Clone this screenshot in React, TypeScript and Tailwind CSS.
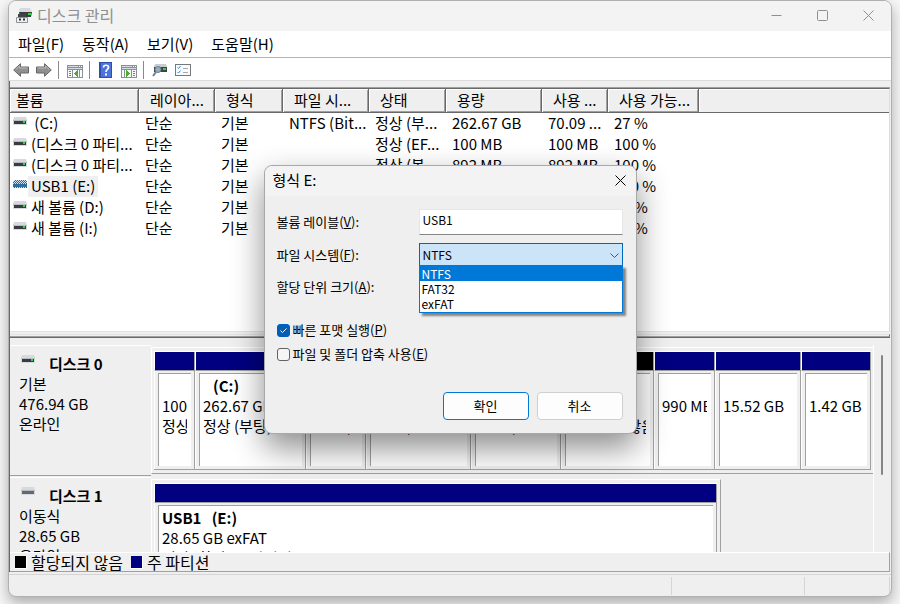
import type { ReactNode } from 'react'
import { clsx } from 'clsx'

interface Volume {
  name: string
  layout: string
  type: string
  fs: string
  status: string
  capacity: string
  free: string
  percent: string
  selected?: boolean
}

interface Partition {
  title?: string
  size: string
  status?: string
  unallocated?: boolean
}

const columns = [
  { label: '볼륨', width: 'w-[129px]' },
  { label: '레이아...', width: 'w-[76px]' },
  { label: '형식', width: 'w-[68px]' },
  { label: '파일 시...', width: 'w-[86px]' },
  { label: '상태', width: 'w-[77px]' },
  { label: '용량', width: 'w-[96px]' },
  { label: '사용 ...', width: 'w-[66px]' },
  { label: '사용 가능...', width: 'w-[91px]' },
]

const volumes: Volume[] = [
  { name: '\u00a0(C:)', layout: '단순', type: '기본', fs: 'NTFS (Bit...', status: '정상 (부...', capacity: '262.67 GB', free: '70.09 ...', percent: '27 %' },
  { name: '(디스크 0 파티...', layout: '단순', type: '기본', fs: '', status: '정상 (EF...', capacity: '100 MB', free: '100 MB', percent: '100 %' },
  { name: '(디스크 0 파티...', layout: '단순', type: '기본', fs: '', status: '정상 (복...', capacity: '892 MB', free: '892 MB', percent: '100 %' },
  { name: 'USB1 (E:)', layout: '단순', type: '기본', fs: 'exFAT', status: '정상 (활...', capacity: '28.65 GB', free: '28.65 ...', percent: '100 %', selected: true },
  { name: '새 볼륨 (D:)', layout: '단순', type: '기본', fs: 'NTFS', status: '정상 (주...', capacity: '15.52 GB', free: '15.43 ...', percent: '99 %' },
  { name: '새 볼륨 (I:)', layout: '단순', type: '기본', fs: 'NTFS', status: '정상 (주...', capacity: '1.42 GB', free: '1.40 GB', percent: '99 %' },
]

const disk0: Partition[] = [
  { size: '100 MB', status: '정상 (EFI)' },
  { title: '(C:)', size: '262.67 GB NTFS', status: '정상 (부팅, 페이지 파일)' },
  { size: '892 MB', status: '정상 (복구)' },
  { size: '97.66 GB', status: '정상 (주 파티션)' },
  { size: '48.83 GB', status: '정상 (주 파티션)' },
  { size: '49.87 GB', status: '할당되지 않음', unallocated: true },
  { size: '990 MB' },
  { size: '15.52 GB' },
  { size: '1.42 GB' },
]

const disk1: Partition[] = [
  { title: 'USB1\u00a0\u00a0 (E:)', size: '28.65 GB exFAT', status: '정상 (활성, 주 파티션)' },
]

function DriveIcon({ led, selected }: { led?: boolean; selected?: boolean }) {
  if (selected) {
    return (
      <svg width="14" height="8" viewBox="0 0 14 8" className="shrink-0" shapeRendering="crispEdges" aria-hidden="true">
        <defs>
          <pattern id="dither" width="2" height="2" patternUnits="userSpaceOnUse">
            <rect width="1" height="1" fill="#0078d7" />
            <rect x="1" y="1" width="1" height="1" fill="#0078d7" />
          </pattern>
        </defs>
        <path d="M1 0h12v1h1v7H0V1h1z" fill="#cfe0ee" />
        <path d="M0 4h14v3H0z" fill="#2f6f9f" />
        <path d="M1 0h12v1h1v7H0V1h1z" fill="url(#dither)" />
      </svg>
    )
  }
  return (
    <svg width="14" height="8" viewBox="0 0 14 8" className="shrink-0" aria-hidden="true">
      <path d="M1 0h12l1 3v5H0V3z" fill="#d6d9de" />
      <path d="M0 3h14v1H0z" fill="#b9bcc2" />
      <path d="M1 4h12v3H1z" fill={led ? '#3a3d40' : '#66696c'} />
      {led && <rect x="10" y="4" width="2" height="2" fill="#22e03c" />}
    </svg>
  )
}

function AppIcon() {
  return (
    <svg width="16" height="15" viewBox="0 0 16 15" aria-hidden="true">
      <path d="M4 0h10l2 4v1H3V3z" fill="#d6dade" />
      <path d="M3 4h13l-1 5H4z" fill="#3a3d40" />
      <rect x="12" y="5" width="3" height="2" fill="#27dd3e" />
      <path d="M2 6h8v4H2z" fill="#3f4347" />
      <path d="M0.500 9.500h11v5h-11z" fill="#f0f1f2" stroke="#8d9196" />
      <path d="M3 10.500h2v2H3zM7 10.500h2v2H7z" fill="#2b2d2f" />
    </svg>
  )
}

function ArrowIcon({ forward }: { forward?: boolean }) {
  return (
    <svg width="16" height="14" viewBox="0 0 16 14" className={clsx(forward && '-scale-x-100')} aria-hidden="true">
      <path d="M0.700 7l6.800-6.300v3.300h8v6h-8v3.300z" fill="#8f8f8f" stroke="#666" strokeLinejoin="round" />
      <path d="M2.500 6.800L6.500 3v2H14.500" fill="none" stroke="#bdbdbd" />
    </svg>
  )
}

function PanelIcon({ right }: { right?: boolean }) {
  return (
    <svg width="16" height="13" viewBox="0 0 16 13" shapeRendering="crispEdges" aria-hidden="true">
      <path d="M0 0h16v13H0z" fill="#8a9098" />
      <path d="M1 1h10v1H1zM1 3h14v1H1z" fill="#d5dbe2" />
      <path d="M12 1h1v1h-1zM14 1h1v1h-1z" fill="#fff" />
      {right ? (
        <>
          <path d="M1 5h2v7H1zM4 5h6v7H4zM11 5h4v7h-4z" fill="#fbfbfb" />
          <path d="M5 5l4 3.500L5 12z" fill="#45b02c" />
          <path d="M12 6h2v1h-2zM12 8h2v1h-2zM12 10h2v1h-2z" fill="#5b7fae" />
        </>
      ) : (
        <>
          <path d="M1 5h4v7H1zM6 5h6v7H6zM13 5h2v7h-2z" fill="#fbfbfb" />
          <path d="M11 5v7L7 8.500z" fill="#45b02c" />
          <path d="M2 6h2v1H2zM2 8h2v1H2zM2 10h2v1H2z" fill="#5b7fae" />
        </>
      )}
    </svg>
  )
}

function HelpIcon() {
  return (
    <svg width="13" height="16" viewBox="0 0 13 16" aria-hidden="true">
      <rect width="13" height="16" fill="#2f4fae" />
      <rect x="2" y="1" width="10" height="14" fill="#4c74dc" />
      <path d="M4.500 5.500c0-3 5-3 5 0 0 2-2.500 2-2.500 4.500" fill="none" stroke="#fff" strokeWidth="1.700" />
      <rect x="6" y="11.500" width="2" height="2" fill="#fff" />
    </svg>
  )
}

function RescanIcon() {
  return (
    <svg width="16" height="14" viewBox="0 0 16 14" aria-hidden="true">
      <path d="M3 1h11l1 3H2z" fill="#c9cdd2" />
      <path d="M2 4h13v5H2z" fill="#3f4245" />
      <rect x="11" y="5" width="3" height="2" fill="#27dd3e" />
      <circle cx="6" cy="6.500" r="3" fill="#8fb0c4" stroke="#6d7f8c" />
      <path d="M4 9L1 13" stroke="#6f7f8c" strokeWidth="2" />
    </svg>
  )
}

function ChecklistIcon() {
  return (
    <svg width="16" height="12" viewBox="0 0 16 12" aria-hidden="true">
      <rect x="0.500" y="0.500" width="15" height="11" fill="#fafafa" stroke="#75797e" />
      <path d="M2.500 3.500l1 1 2-2.500M2.500 8l1 1 2-2.500" fill="none" stroke="#2f8fe0" />
      <path d="M8 4.500h5M8 8.500h5" stroke="#a6a9ad" />
    </svg>
  )
}

function CloseIcon() {
  return (
    <svg width="11" height="11" viewBox="0 0 11 11" fill="none" stroke="currentColor" aria-hidden="true">
      <path d="M0.500 0.500l10 10M10.500 0.500l-10 10" />
    </svg>
  )
}

function ToolDivider() {
  return <span className="h-[18px] w-px bg-[#8a8a8a]" />
}

function TitleBar() {
  return (
    <header className="flex h-[30px] shrink-0 items-center bg-[#f3f3f3] pb-0.5 pl-[7px] text-[#8f8f8f]">
      <AppIcon />
      <h1 className="flex-1 pl-[5px] text-base leading-5">디스크 관리</h1>
      <div className="flex">
        <button type="button" aria-label="최소화" className="flex h-7 w-[46px] items-center justify-center">
          <svg width="11" height="11" viewBox="0 0 11 11" stroke="currentColor" aria-hidden="true">
            <path d="M0.500 5.500h10" />
          </svg>
        </button>
        <button type="button" aria-label="최대화" className="flex h-7 w-[46px] items-center justify-center">
          <svg width="11" height="11" viewBox="0 0 11 11" fill="none" stroke="currentColor" aria-hidden="true">
            <rect x="0.500" y="0.500" width="10" height="10" rx="1" />
          </svg>
        </button>
        <button type="button" aria-label="닫기" className="flex h-7 w-[46px] items-center justify-center">
          <CloseIcon />
        </button>
      </div>
    </header>
  )
}

function MenuBar() {
  return (
    <nav className="flex h-[27px] shrink-0 items-center gap-[18px] border-b border-[#b4b4b4] bg-white pl-[9px] text-[15px] leading-5">
      {['파일(F)', '동작(A)', '보기(V)', '도움말(H)'].map((item) => (
        <button key={item} type="button">
          {item}
        </button>
      ))}
    </nav>
  )
}

function Toolbar() {
  return (
    <div className="flex h-[23px] shrink-0 items-center border-b border-[#dcdcdc] bg-white pt-0.5 pl-1">
      <div className="flex items-center gap-[7px] pr-1.5">
        <button type="button" aria-label="뒤로"><ArrowIcon /></button>
        <button type="button" aria-label="앞으로"><ArrowIcon forward /></button>
      </div>
      <ToolDivider />
      <button type="button" aria-label="콘솔 트리 표시" className="pt-0.5 pr-1.5 pl-2"><PanelIcon /></button>
      <ToolDivider />
      <div className="flex items-center gap-[9px] pr-1.5 pl-[9px]">
        <button type="button" aria-label="도움말"><HelpIcon /></button>
        <button type="button" aria-label="작업 창 표시" className="pt-0.5"><PanelIcon right /></button>
      </div>
      <ToolDivider />
      <div className="flex items-center gap-[7px] pl-2">
        <button type="button" aria-label="다시 검사"><RescanIcon /></button>
        <button type="button" aria-label="속성"><ChecklistIcon /></button>
      </div>
    </div>
  )
}

function VolumeTable() {
  return (
    <table className="w-full table-fixed border-separate border-spacing-0 text-left leading-5 whitespace-nowrap">
      <thead>
        <tr>
          {columns.map((col, i) => (
            <th
              key={col.label}
              className={clsx(
                'h-6 overflow-hidden border-r border-b border-[#696969] bg-[#efefef] p-0 pb-0.5 font-normal shadow-[inset_1px_1px_0_#fff,inset_-1px_-1px_0_#a0a0a0]',
                i === 0 ? 'pl-1.5' : 'pl-[11px]',
                col.width,
              )}
            >
              {col.label}
            </th>
          ))}
          <th aria-label="빈 열" className="h-6 border-b border-[#696969] bg-[#efefef] p-0 shadow-[inset_1px_1px_0_#fff]" />
        </tr>
      </thead>
      <tbody>
        {volumes.map((v, i) => (
          <tr key={i} className="align-top">
            <td className="h-[21px] overflow-hidden p-0">
              <div className="flex items-start pl-[3px]">
                <span className="pt-1">
                  <DriveIcon led selected={v.selected} />
                </span>
                <span className={clsx('ml-px h-[21px] px-[3px]', v.selected && 'bg-[#efefef]')}>{v.name}</span>
              </div>
            </td>
            {[v.layout, v.type, v.fs, v.status, v.capacity, v.free, v.percent].map((text, j) => (
              <td key={j} className="overflow-hidden p-0 pl-1.5">
                {text}
              </td>
            ))}
            <td />
          </tr>
        ))}
      </tbody>
    </table>
  )
}

function PartitionCell({ part }: { part: Partition }) {
  return (
    <div className="flex min-w-0 flex-col border-r border-b border-[#a0a0a0]">
      <div
        className={clsx(
          'h-[19px] shrink-0 border-b border-l border-b-[#a0a0a0] border-l-white',
          part.unallocated ? 'bg-black' : 'bg-[#000080]',
        )}
      />
      <div className="flex min-h-0 flex-1 border-l border-white pt-0.5 pr-[3px] pb-[3px] pl-[3px]">
        <div className="min-w-0 flex-1 border-t border-l border-[#a0a0a0] bg-white pt-0.5 pr-1 pl-[3px]">
          <div className="overflow-hidden whitespace-nowrap">
            <p className={clsx('h-5 leading-5 font-bold', part.title === '(C:)' && 'pl-2.5')}>{part.title}</p>
            <p className="h-5 leading-5">{part.size}</p>
            <p className="h-5 leading-5">{part.status}</p>
          </div>
        </div>
      </div>
    </div>
  )
}

interface DiskRowProps {
  name: string
  lines: string[]
  led?: boolean
  children: ReactNode
}

function DiskRow({ name, lines, led, children }: DiskRowProps) {
  return (
    <section className="flex h-[132px] shrink-0">
      <div className="h-[131px] w-[141px] shrink-0 border-t border-b border-t-white border-b-[#a0a0a0] pt-2 pl-[9px]">
        <div className="flex h-5 items-start">
          <span className="pt-px pl-0.5">
            <DriveIcon led={led} />
          </span>
          <h2 className="pl-3.5 leading-5 font-bold">{name}</h2>
        </div>
        {lines.map((line) => (
          <p key={line} className="h-5 leading-5">
            {line}
          </p>
        ))}
      </div>
      <div className="min-w-0 flex-1 pt-0.5">{children}</div>
    </section>
  )
}

function DiskView() {
  return (
    <div className="flex min-h-0 flex-[207_1_0%] overflow-hidden bg-[#efefef] pt-[7px]">
      <div className="min-w-0 flex-1 border-r border-white">
        <DiskRow name="디스크 0" lines={['기본', '476.94 GB', '온라인']} led>
          <div className="flex h-[127px] border-t border-b border-l border-t-white border-b-[#a0a0a0] border-l-white pt-[3px] pr-0.5 pb-[3px] pl-0.5">
            <div className="grid flex-1 grid-cols-[41fr_111fr_60fr_105fr_90fr_93fr_61fr_86fr_70fr] border-t border-white">
              {disk0.map((part, i) => (
                <PartitionCell key={i} part={part} />
              ))}
            </div>
          </div>
        </DiskRow>
        <DiskRow name="디스크 1" lines={['이동식', '28.65 GB', '온라인']}>
          <div className="flex h-[127px] w-[79%] border-t border-r border-b border-l border-t-white border-r-[#a0a0a0] border-b-[#a0a0a0] border-l-white pt-[3px] pr-[3px] pb-[3px] pl-0.5">
            <div className="grid flex-1 border-t border-white">
              {disk1.map((part, i) => (
                <PartitionCell key={i} part={part} />
              ))}
            </div>
          </div>
        </DiskRow>
      </div>
      <div className="flex w-4 shrink-0 justify-center pt-2.5">
        <span className="h-[120px] w-0.5 rounded-full bg-[#858585]" />
      </div>
    </div>
  )
}

function Legend() {
  return (
    <div className="flex h-5 shrink-0 items-center border-t border-r border-b border-t-white border-r-[#a0a0a0] border-b-[#a0a0a0] bg-[#efefef] pl-[5px] text-base leading-5">
      <span className="h-[13px] w-3 border-r border-b border-white bg-black" />
      <span className="pr-2 pl-1">할당되지 않음</span>
      <span className="h-[13px] w-3 border-r border-b border-white bg-[#000080]" />
      <span className="pl-1">주 파티션</span>
    </div>
  )
}

function FormatDialog() {
  return (
    <div
      role="dialog"
      aria-label="형식 E:"
      className="w-[373px] rounded-lg border border-[#a8a8a8] bg-[#efefef] text-xs shadow-[0_14px_32px_rgba(0,0,0,0.45)]"
    >
      <div className="flex h-[30px] items-center justify-between rounded-t-lg bg-[#f3f3f3] pr-2.5 pb-0.5 pl-2">
        <h2 className="text-[15px] leading-5">형식 E:</h2>
        <button type="button" aria-label="닫기">
          <CloseIcon />
        </button>
      </div>
      <form className="p-[13px] pl-3" onSubmit={(e) => e.preventDefault()}>
        <div className="grid grid-cols-[142px_1fr] items-center gap-y-2">
          <label htmlFor="label" className="text-[13px]">
            볼륨 레이블(<u>V</u>):
          </label>
          <input
            id="label"
            type="text"
            defaultValue="USB1"
            className="h-[26px] min-w-0 border border-b-[#868686] border-[#e6e6e6] bg-white px-[3px] pb-1.5 outline-none"
          />
          <label htmlFor="fs" className="text-[13px]">
            파일 시스템(<u>F</u>):
          </label>
          <div className="relative">
            <select
              id="fs"
              defaultValue="NTFS"
              className="block h-6 w-full appearance-none border border-[#0067c0] bg-[#cce4f7] px-[3px] pb-px outline-none"
            >
              <option>NTFS</option>
              <option>FAT32</option>
              <option>exFAT</option>
            </select>
            <svg width="9" height="5" viewBox="0 0 9 5" className="pointer-events-none absolute top-2.5 right-1" fill="none" stroke="#555" aria-hidden="true">
              <path d="M0.500 0.500l4 4 4-4" />
            </svg>
            <ul
              role="listbox"
              aria-label="파일 시스템"
              className="absolute inset-x-0 top-[22px] z-10 border border-[#0078d7] bg-white pb-px leading-[15px] shadow-[3px_3px_2px_rgba(0,0,0,0.45)]"
            >
              <li role="option" aria-selected="true" className="bg-[#0078d7] px-0.5 text-white">NTFS</li>
              <li role="option" aria-selected="false" className="px-0.5">FAT32</li>
              <li role="option" aria-selected="false" className="px-0.5">exFAT</li>
            </ul>
          </div>
          <label htmlFor="unit" className="text-[13px]">
            할당 단위 크기(<u>A</u>):
          </label>
          <select id="unit" className="h-6 w-full appearance-none border border-[#d0d0d0] bg-white px-[3px]">
            <option>기본 할당 크기</option>
          </select>
        </div>
        <div className="flex flex-col gap-2 pt-[23px] text-[13px] leading-4">
          <label className="flex items-center gap-[3px]">
            <span className="relative flex">
              <input type="checkbox" defaultChecked className="peer h-[13px] w-[13px] appearance-none rounded-[3px] border border-[#626262] bg-[#f5f5f5] checked:border-[#005fb8] checked:bg-[#005fb8]" />
              <svg width="13" height="13" viewBox="0 0 13 13" className="pointer-events-none absolute inset-0 hidden peer-checked:block" fill="none" stroke="#fff" aria-hidden="true">
                <path d="M3.500 6.500l2 2 4-4" />
              </svg>
            </span>
            <span>빠른 포맷 실행(<u>P</u>)</span>
          </label>
          <label className="flex items-center gap-[3px]">
            <input type="checkbox" className="h-[13px] w-[13px] appearance-none rounded-[3px] border border-[#626262] bg-[#f5f5f5]" />
            <span>파일 및 폴더 압축 사용(<u>E</u>)</span>
          </label>
        </div>
        <div className="flex justify-end gap-2 pt-[30px] text-[13px]">
          <button type="submit" className="h-7 w-[86px] rounded border border-[#0078d4] bg-[#fdfdfd]">
            확인
          </button>
          <button type="button" className="h-7 w-[86px] rounded border border-[#d0d0d0] bg-[#fdfdfd]">
            취소
          </button>
        </div>
      </form>
    </div>
  )
}

export default function App() {
  return (
    <div className="relative flex h-screen flex-col overflow-hidden bg-[#f6f6f6] px-2 pb-[7px] font-['Noto_Sans_CJK_KR','Liberation_Sans',sans-serif] text-[15px] leading-[21px] text-black">
      <main className="flex min-h-0 flex-1 flex-col overflow-hidden rounded-lg border border-[#b0b0b0] bg-[#efefef] shadow-[0_6px_14px_rgba(0,0,0,0.3)]">
        <TitleBar />
        <MenuBar />
        <Toolbar />
        <div className="flex min-h-0 flex-1 flex-col border-l border-[#696969] pt-1.5 pr-px">
          <div className="flex min-h-0 flex-[249_1_0%] flex-col border-t border-b border-t-[#a0a0a0] border-b-[#696969]">
            <div className="min-h-0 flex-1 overflow-hidden border-t border-r border-b border-t-[#696969] border-r-[#dcdcdc] border-b-[#e3e3e3] bg-white">
              <VolumeTable />
            </div>
            <div className="mt-0.5 h-[3px] shrink-0 border-t border-r border-b border-t-[#e3e3e3] border-r-[#696969] border-b-[#a0a0a0]" />
          </div>
          <DiskView />
          <Legend />
        </div>
        <footer className="mt-0.5 flex h-[22px] shrink-0 justify-end border-t border-[#d5d5d5] pt-px pr-px">
          <span className="my-px w-[133px] border-l border-[#d5d5d5]" />
          <span className="my-px w-[86px] border-r border-l border-[#d5d5d5]" />
        </footer>
      </main>
      <div className="absolute inset-x-0 top-[165px] flex justify-center">
        <FormatDialog />
      </div>
    </div>
  )
}
